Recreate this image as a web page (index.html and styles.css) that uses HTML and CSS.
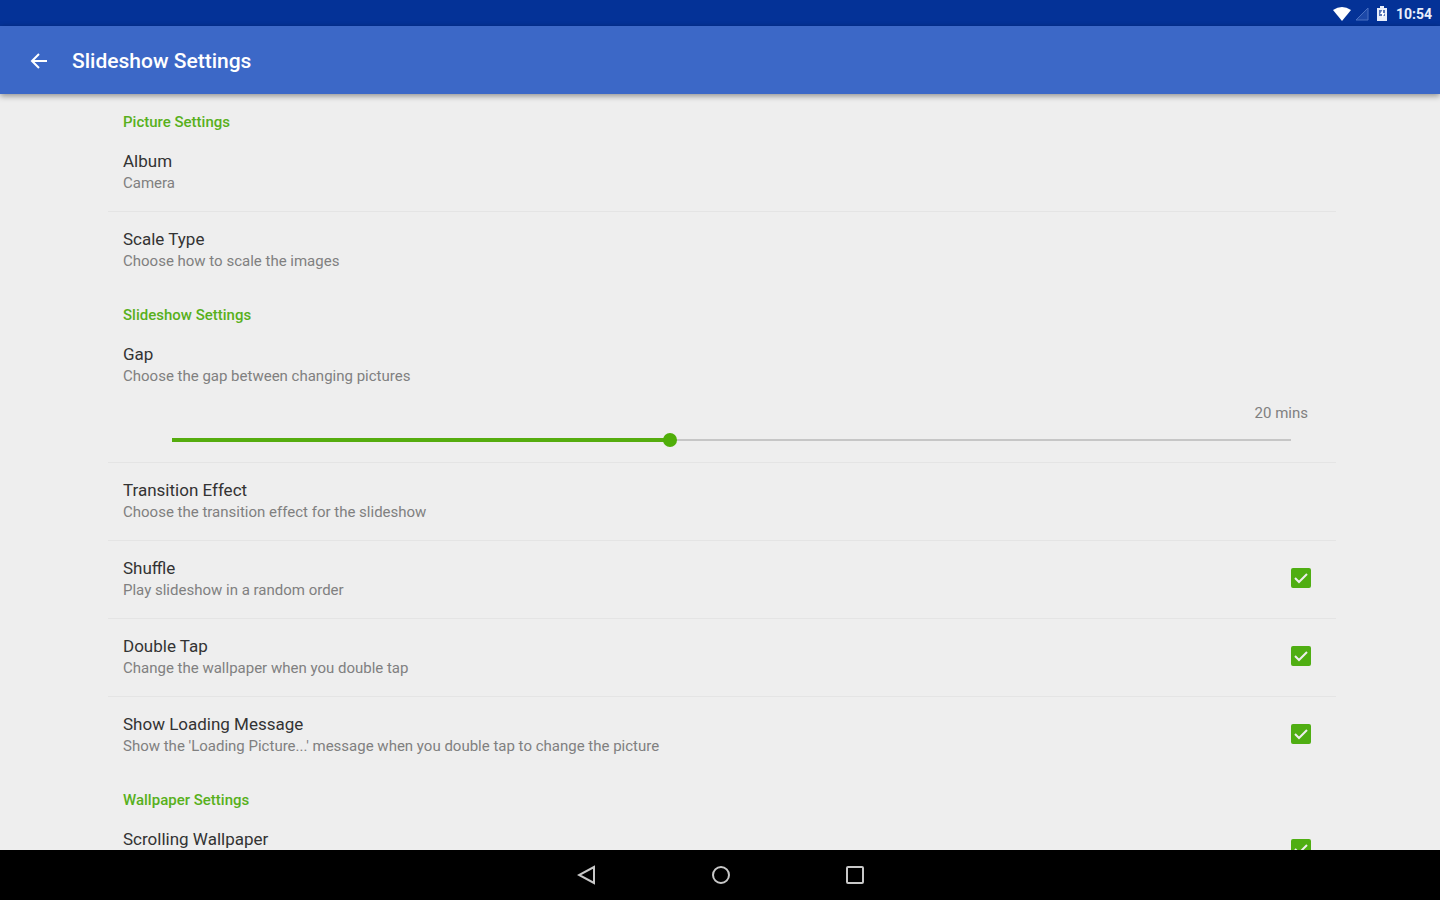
FILE: index.html
```html
<!DOCTYPE html>
<html lang="en">
<head>
  <meta charset="UTF-8">
  <meta name="viewport" content="width=device-width, initial-scale=1.0">
  <title>Slideshow Settings</title>
  <link rel="stylesheet" href="styles.css">
</head>
<body>
  <div class="status-bar">
    <svg class="wifi" width="20" height="16" viewBox="0 0 20 16"><path d="M1 4Q10-2 19 4L10 15Z" fill="#fff"/></svg>
    <svg class="signal" width="16" height="16" viewBox="0 0 16 16"><path d="M14 2V14H2Z" fill="#1c48a8" stroke="#4a70c2"/></svg>
    <svg class="battery" width="12" height="16" viewBox="0 0 12 16"><path d="M4 0h4v2h3v13H1V2h3z" fill="#e8eefb"/><path d="M3 4h6v6H3z" fill="#5474b8"/><path d="M7 3L4 8h2v4l3-5H7z" fill="#fff"/></svg>
    <span class="clock">10:54</span>
  </div>

  <header class="app-bar">
    <button class="back" type="button" aria-label="Back">
      <svg width="18" height="18" viewBox="0 0 18 18"><path d="M17 9H2M9 2L2 9l7 7" fill="none" stroke="#fff" stroke-width="2"/></svg>
    </button>
    <h1>Slideshow Settings</h1>
  </header>

  <main class="settings">
    <section>
      <h2>Picture Settings</h2>
      <div class="row">
        <div class="text">
          <h3>Album</h3>
          <p>Camera</p>
        </div>
      </div>
      <div class="row">
        <div class="text">
          <h3>Scale Type</h3>
          <p>Choose how to scale the images</p>
        </div>
      </div>
    </section>

    <section>
      <h2>Slideshow Settings</h2>
      <div class="row slider-row">
        <label class="text" for="gap">
          <span class="title">Gap</span>
          <span class="summary">Choose the gap between changing pictures</span>
        </label>
        <output class="value" for="gap">20 mins</output>
        <input class="slider" id="gap" type="range" min="0" max="45" value="20" style="--fill: 44.4%">
      </div>
      <div class="row">
        <div class="text">
          <h3>Transition Effect</h3>
          <p>Choose the transition effect for the slideshow</p>
        </div>
      </div>
      <div class="row">
        <label class="text" for="shuffle">
          <span class="title">Shuffle</span>
          <span class="summary">Play slideshow in a random order</span>
        </label>
        <span class="check">
          <input id="shuffle" type="checkbox" checked>
          <svg width="20" height="20" viewBox="0 0 20 20"><path d="M4 10l4 4 8-8"/></svg>
        </span>
      </div>
      <div class="row">
        <label class="text" for="double-tap">
          <span class="title">Double Tap</span>
          <span class="summary">Change the wallpaper when you double tap</span>
        </label>
        <span class="check">
          <input id="double-tap" type="checkbox" checked>
          <svg width="20" height="20" viewBox="0 0 20 20"><path d="M4 10l4 4 8-8"/></svg>
        </span>
      </div>
      <div class="row">
        <label class="text" for="loading">
          <span class="title">Show Loading Message</span>
          <span class="summary">Show the 'Loading Picture...' message when you double tap to change the picture</span>
        </label>
        <span class="check">
          <input id="loading" type="checkbox" checked>
          <svg width="20" height="20" viewBox="0 0 20 20"><path d="M4 10l4 4 8-8"/></svg>
        </span>
      </div>
    </section>

    <section>
      <h2>Wallpaper Settings</h2>
      <div class="row">
        <label class="text" for="scrolling">
          <span class="title">Scrolling Wallpaper</span>
        </label>
        <span class="check">
          <input id="scrolling" type="checkbox" checked>
          <svg width="20" height="20" viewBox="0 0 20 20"><path d="M4 10l4 4 8-8"/></svg>
        </span>
      </div>
    </section>
  </main>

  <nav class="nav-bar">
    <button type="button" aria-label="Back">
      <svg width="20" height="20" viewBox="0 0 20 20"><path d="M17 2v16L2 10z"/></svg>
    </button>
    <button type="button" aria-label="Home">
      <svg width="20" height="20" viewBox="0 0 20 20"><circle cx="10" cy="10" r="8"/></svg>
    </button>
    <button type="button" aria-label="Recent apps">
      <svg width="20" height="20" viewBox="0 0 20 20"><rect x="2" y="2" width="16" height="16" rx="1"/></svg>
    </button>
  </nav>

  <script>
    const gap = document.getElementById('gap');
    const value = document.querySelector('.value');

    gap.addEventListener('input', () => {
      value.textContent = gap.value + ' mins';
      gap.style.setProperty('--fill', (gap.value / gap.max * 100) + '%');
    });
  </script>
</body>
</html>
```
FILE: styles.css
```css
* {
  margin: 0;
  padding: 0;
  box-sizing: border-box;
}

body {
  display: flex;
  flex-direction: column;
  height: 100vh;
  background: #eee;
  color: #333;
  font-family: Roboto, sans-serif;
}

button {
  display: flex;
  align-items: center;
  justify-content: center;
  border: none;
  background: none;
  cursor: pointer;
}

.status-bar {
  display: flex;
  flex: none;
  align-items: center;
  justify-content: flex-end;
  height: 26px;
  padding: 2px 8px 0;
  background: #043297;
  color: #e8eefb;
}

.wifi {
  margin-right: 2px;
}

.battery {
  margin: 0 8px 0 6px;
}

.clock {
  font-size: 14px;
  font-weight: 700;
}

.app-bar {
  display: flex;
  flex: none;
  align-items: center;
  gap: 8px;
  height: 68px;
  padding: 2px 14px 0;
  background: #3c68c7;
  color: #fff;
  box-shadow: 0 2px 6px rgba(0, 0, 0, 0.4);
  z-index: 1;
}

.back {
  width: 50px;
  height: 48px;
}

h1 {
  font-size: 21px;
  font-weight: 500;
}

.settings {
  flex: 1;
  min-height: 0;
  padding: 2px 104px 0 108px;
  overflow: hidden;
}

h2 {
  padding: 16px 15px 2px;
  color: #58b01c;
  font-size: 15px;
  font-weight: 500;
  line-height: 20px;
}

.row {
  display: flex;
  align-items: center;
  min-height: 77px;
  padding: 16px 25px 17px 15px;
}

.row:not(:last-child) {
  border-bottom: 1px solid #e4e4e4;
  min-height: 78px;
}

.text {
  flex: 1;
  align-self: flex-start;
}

h3,
.title {
  display: block;
  font-size: 17px;
  font-weight: 400;
  line-height: 22px;
}

p,
.summary {
  display: block;
  color: #808080;
  font-size: 15px;
  line-height: 22px;
}

.slider-row {
  flex-direction: column;
  align-items: stretch;
  padding-bottom: 14px;
}

.value {
  align-self: flex-end;
  margin: 16px 3px 9px;
  color: #808080;
  font-size: 15px;
  line-height: 20px;
}

.slider {
  appearance: none;
  height: 16px;
  margin: 0 20px 0 49px;
  background: none;
}

.slider::-webkit-slider-runnable-track {
  height: 4px;
  background:
    linear-gradient(#55ac0e, #55ac0e) left / var(--fill) 4px no-repeat,
    linear-gradient(#c6c6c6, #c6c6c6) center / 100% 2px no-repeat;
}

.slider::-webkit-slider-thumb {
  appearance: none;
  width: 14px;
  height: 14px;
  margin-top: -5px;
  border-radius: 50%;
  background: #4fae08;
}

.check {
  display: grid;
  margin-bottom: 2px;
}

.check input,
.check svg {
  grid-area: 1 / 1;
}

.check input {
  appearance: none;
  width: 20px;
  height: 20px;
  border: 2px solid #808080;
  border-radius: 2px;
}

.check input:checked {
  border-color: #4fae12;
  background: #4fae12;
}

.check svg {
  fill: none;
  stroke: #eee;
  stroke-width: 2;
  pointer-events: none;
}

.check input:not(:checked) + svg {
  display: none;
}

.nav-bar {
  display: flex;
  flex: none;
  justify-content: center;
  gap: 86px;
  height: 50px;
  padding-left: 2px;
  background: #000;
}

.nav-bar button {
  width: 48px;
}

.nav-bar svg {
  fill: none;
  stroke: #c8c8c8;
  stroke-width: 2;
}
```
